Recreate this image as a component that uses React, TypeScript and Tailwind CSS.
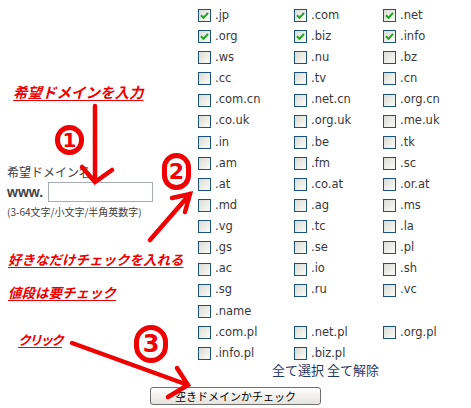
import React from 'react';

const ROWS: [string, boolean][][] = [
  [['.jp', true], ['.com', true], ['.net', true]],
  [['.org', true], ['.biz', true], ['.info', true]],
  [['.ws', false], ['.nu', false], ['.bz', false]],
  [['.cc', false], ['.tv', false], ['.cn', false]],
  [['.com.cn', false], ['.net.cn', false], ['.org.cn', false]],
  [['.co.uk', false], ['.org.uk', false], ['.me.uk', false]],
  [['.in', false], ['.be', false], ['.tk', false]],
  [['.am', false], ['.fm', false], ['.sc', false]],
  [['.at', false], ['.co.at', false], ['.or.at', false]],
  [['.md', false], ['.ag', false], ['.ms', false]],
  [['.vg', false], ['.tc', false], ['.la', false]],
  [['.gs', false], ['.se', false], ['.pl', false]],
  [['.ac', false], ['.io', false], ['.sh', false]],
  [['.sg', false], ['.ru', false], ['.vc', false]],
  [['.name', false]],
  [['.com.pl', false], ['.net.pl', false], ['.org.pl', false]],
  [['.info.pl', false], ['.biz.pl', false]],
];

const JP = { fontFamily: '"Noto Sans CJK JP", sans-serif' };
const LATIN = { fontFamily: '"DejaVu Sans", Verdana, sans-serif' };

function Check({ label, checked }: { label: string; checked: boolean }) {
  return (
    <div className="flex h-[21.125px] items-center gap-[4px]">
      <div className="flex h-[13px] w-[13px] shrink-0 items-center justify-center border border-[#1c5180] bg-gradient-to-br from-[#dcdcd5] to-[#fbfbf9]">
        {checked && (
          <svg width="9" height="9" viewBox="0 0 9 9">
            <path d="M1 4.2 L3.5 6.8 L8 1.8" fill="none" stroke="#21a121" strokeWidth="2" />
          </svg>
        )}
      </div>
      <span className="text-[11.5px] leading-none text-[#383838]" style={LATIN}>
        {label}
      </span>
    </div>
  );
}

function Note({ children, className }: { children: React.ReactNode; className: string }) {
  return (
    <div
      className={`font-bold italic text-[#ee0000] underline decoration-[#ee0000] underline-offset-2 ${className}`}
      style={JP}
    >
      {children}
    </div>
  );
}

function Circled({ n, className }: { n: string; className: string }) {
  return (
    <div
      className={`pointer-events-none absolute flex items-center justify-center rounded-full border-[5px] border-[#f00000] font-bold leading-none text-[#f00000] ${className}`}
      style={{ fontFamily: '"DejaVu Sans", sans-serif' }}
    >
      {n}
    </div>
  );
}

export default function App() {
  return (
    <div className="relative h-[408px] w-[471px] overflow-hidden bg-white">
      <div className="flex">
        {/* left: input side */}
        <div className="flex w-[198px] shrink-0 flex-col">
          <Note className="mt-[84px] pl-[13px] text-[14.5px] leading-[16px]">希望ドメインを入力</Note>
          <div className="mt-[65px] pl-[7px] text-[12px] leading-[14px] text-[#404040]" style={JP}>
            希望ドメイン名
          </div>
          <div className="mt-[3px] flex h-[20px] items-center pl-[7px]">
            <span
              className="w-[41px] text-[14px] font-bold text-[#444]"
              style={{ fontFamily: '"Liberation Sans", Arial, sans-serif' }}
            >
              www.
            </span>
            <input className="h-[20px] w-[105px] border border-[#a5acb5] bg-white outline-none" />
          </div>
          <div className="mt-[4px] pl-[7px] text-[10px] leading-[12px] text-[#404040]" style={JP}>
            (3-64文字/小文字/半角英数字)
          </div>
          <Note className="mt-[33px] pl-[8px] text-[13.5px] leading-[16px]">好きなだけチェックを入れる</Note>
          <Note className="mt-[17px] pl-[8px] text-[13.5px] leading-[16px]">値段は要チェック</Note>
          <Note className="mt-[32px] pl-[18px] text-[13px] leading-[16px] tracking-[-2px]">クリック</Note>
        </div>

        {/* right: tld checkboxes */}
        <div className="flex flex-col pt-[5px]">
          {ROWS.map((row, i) => (
            <div key={i} className="grid grid-cols-[96px_89px_80px]">
              {row.map(([label, checked]) => (
                <Check key={label} label={label} checked={checked} />
              ))}
            </div>
          ))}
          <div className="-mt-[2px] pl-[74px] text-[13px] leading-[16px] text-[#1f3864]" style={JP}>
            全て選択 全て解除
          </div>
        </div>
      </div>

      <div className="mt-[9px] flex justify-center">
        <button
          className="h-[18px] w-[171px] rounded-[3px] border border-[#6f6f6f] bg-gradient-to-b from-white to-[#e4e3dc] text-[11px] leading-none text-black"
          style={JP}
        >
          空きドメインかチェック
        </button>
      </div>

      {/* hand-drawn annotations */}
      <Circled n="1" className="left-[55px] top-[125px] h-[30px] w-[29px] text-[20px]" />
      <Circled n="2" className="left-[162px] top-[153px] h-[37px] w-[29px] text-[22px]" />
      <Circled n="3" className="left-[134px] top-[325px] h-[38px] w-[34px] text-[24px]" />
      <svg className="pointer-events-none absolute left-0 top-0" width="471" height="408">
        <g stroke="#f00000" strokeWidth="4.5" strokeLinecap="round" fill="none">
          <path d="M95 106 L95 182 M82 167 L95 182 L112 170" />
          <path d="M150 240 L190 194 M172 198 L190 194 L185 212" />
          <path d="M72 343 L188 385 M177 368 L188 385 L168 397" />
        </g>
      </svg>
    </div>
  );
}
